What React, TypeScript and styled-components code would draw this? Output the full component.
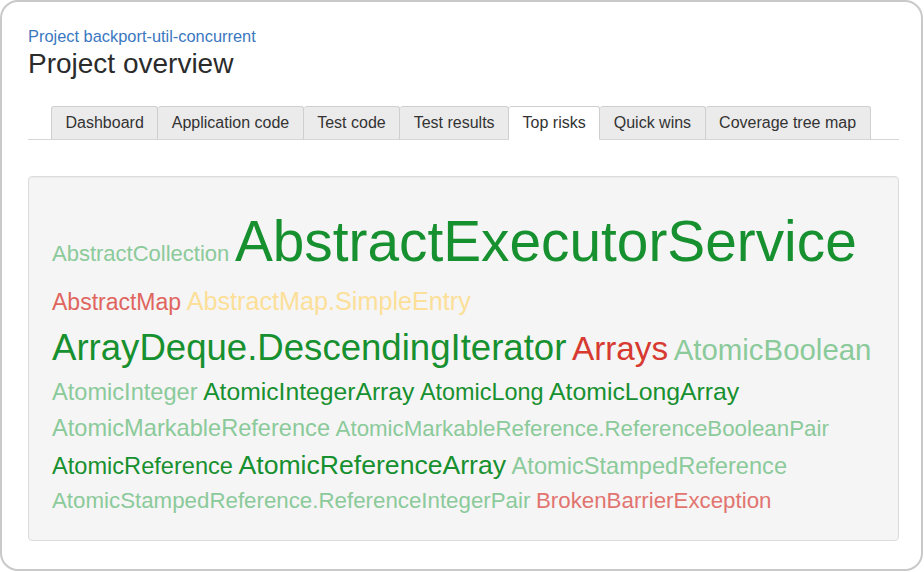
import React from 'react';
import styled, { createGlobalStyle } from 'styled-components';

const GlobalStyle = createGlobalStyle`
  html, body {
    margin: 0;
    padding: 0;
    background: #fff;
  }
  body {
    font-family: "Liberation Sans", Arial, Helvetica, sans-serif;
    color: #333;
  }
`;

const Frame = styled.div`
  box-sizing: border-box;
  width: 923px;
  height: 571px;
  border: 2px solid #c9c9c9;
  border-radius: 18px;
  padding: 24px 22px 0 26px;
  background: #fff;
  overflow: hidden;
`;

const Crumb = styled.a`
  display: block;
  font-size: 16.4px;
  line-height: 20px;
  color: #3a77bf;
  text-decoration: none;
`;

const Title = styled.h1`
  margin: 1px 0 0;
  font-size: 28px;
  line-height: 34px;
  font-weight: normal;
  color: #2b2b2b;
`;

const Tabs = styled.ul`
  list-style: none;
  display: flex;
  margin: 25px 0 0;
  padding: 0 0 0 23px;
  border-bottom: 1px solid #d6d6d6;
`;

const Tab = styled.li<{ $active?: boolean; $first?: boolean }>`
  margin-bottom: -1px;
  padding: 0 13.5px;
  font-size: 16px;
  line-height: 32px;
  color: #333;
  background: ${(p) => (p.$active ? '#fff' : '#ebebeb')};
  border: 1px solid #cfcfcf;
  border-bottom-color: ${(p) => (p.$active ? '#fff' : '#d6d6d6')};
  border-left-width: ${(p) => (p.$first ? '1px' : '0')};
  border-radius: 3px 3px 0 0;
  cursor: pointer;
`;

const Well = styled.div`
  margin-top: 36px;
  padding: 23px 20px 23px 23px;
  background: #f5f5f5;
  border: 1px solid #dcdcdc;
  border-radius: 4px;
  box-shadow: inset 0 1px 1px rgba(0, 0, 0, 0.04);
`;

const Cloud = styled.p`
  margin: 0;
  font-size: 20px;
  line-height: 1.5;
`;

const Word = styled.a<{ $size: number; $color: string }>`
  font-size: ${(p) => p.$size}px;
  line-height: 1.47;
  color: ${(p) => p.$color};
  text-decoration: none;
`;

const GREEN = '#17902f';
const LIGHT = '#8bca9a';
const RED = '#d63a30';
const PINK = '#e0655e';
const SALMON = '#e27470';
const YELLOW = '#fcdf98';

const words: [string, number, string][] = [
  ['AbstractCollection', 22, LIGHT],
  ['AbstractExecutorService', 56.8, GREEN],
  ['AbstractMap', 23, PINK],
  ['AbstractMap.SimpleEntry', 25.2, YELLOW],
  ['ArrayDeque.DescendingIterator', 36.6, GREEN],
  ['Arrays', 33.3, RED],
  ['AtomicBoolean', 29.4, LIGHT],
  ['AtomicInteger', 23.6, LIGHT],
  ['AtomicIntegerArray', 24.7, GREEN],
  ['AtomicLong', 23.4, GREEN],
  ['AtomicLongArray', 24.8, GREEN],
  ['AtomicMarkableReference', 23.6, LIGHT],
  ['AtomicMarkableReference.ReferenceBooleanPair', 22.3, LIGHT],
  ['AtomicReference', 23.6, GREEN],
  ['AtomicReferenceArray', 26.6, GREEN],
  ['AtomicStampedReference', 23.6, LIGHT],
  ['AtomicStampedReference.ReferenceIntegerPair', 22.3, LIGHT],
  ['BrokenBarrierException', 22.3, SALMON],
];

const tabs = [
  'Dashboard',
  'Application code',
  'Test code',
  'Test results',
  'Top risks',
  'Quick wins',
  'Coverage tree map',
];

export default function App() {
  return (
    <>
      <GlobalStyle />
      <Frame>
        <Crumb href="#">Project backport-util-concurrent</Crumb>
        <Title>Project overview</Title>
        <Tabs>
          {tabs.map((t, i) => (
            <Tab key={t} $active={t === 'Top risks'} $first={i === 0}>
              {t}
            </Tab>
          ))}
        </Tabs>
        <Well>
          <Cloud>
            {words.map(([name, size, color]) => (
              <React.Fragment key={name}>
                <Word href="#" $size={size} $color={color}>
                  {name}
                </Word>{' '}
              </React.Fragment>
            ))}
          </Cloud>
        </Well>
      </Frame>
    </>
  );
}
